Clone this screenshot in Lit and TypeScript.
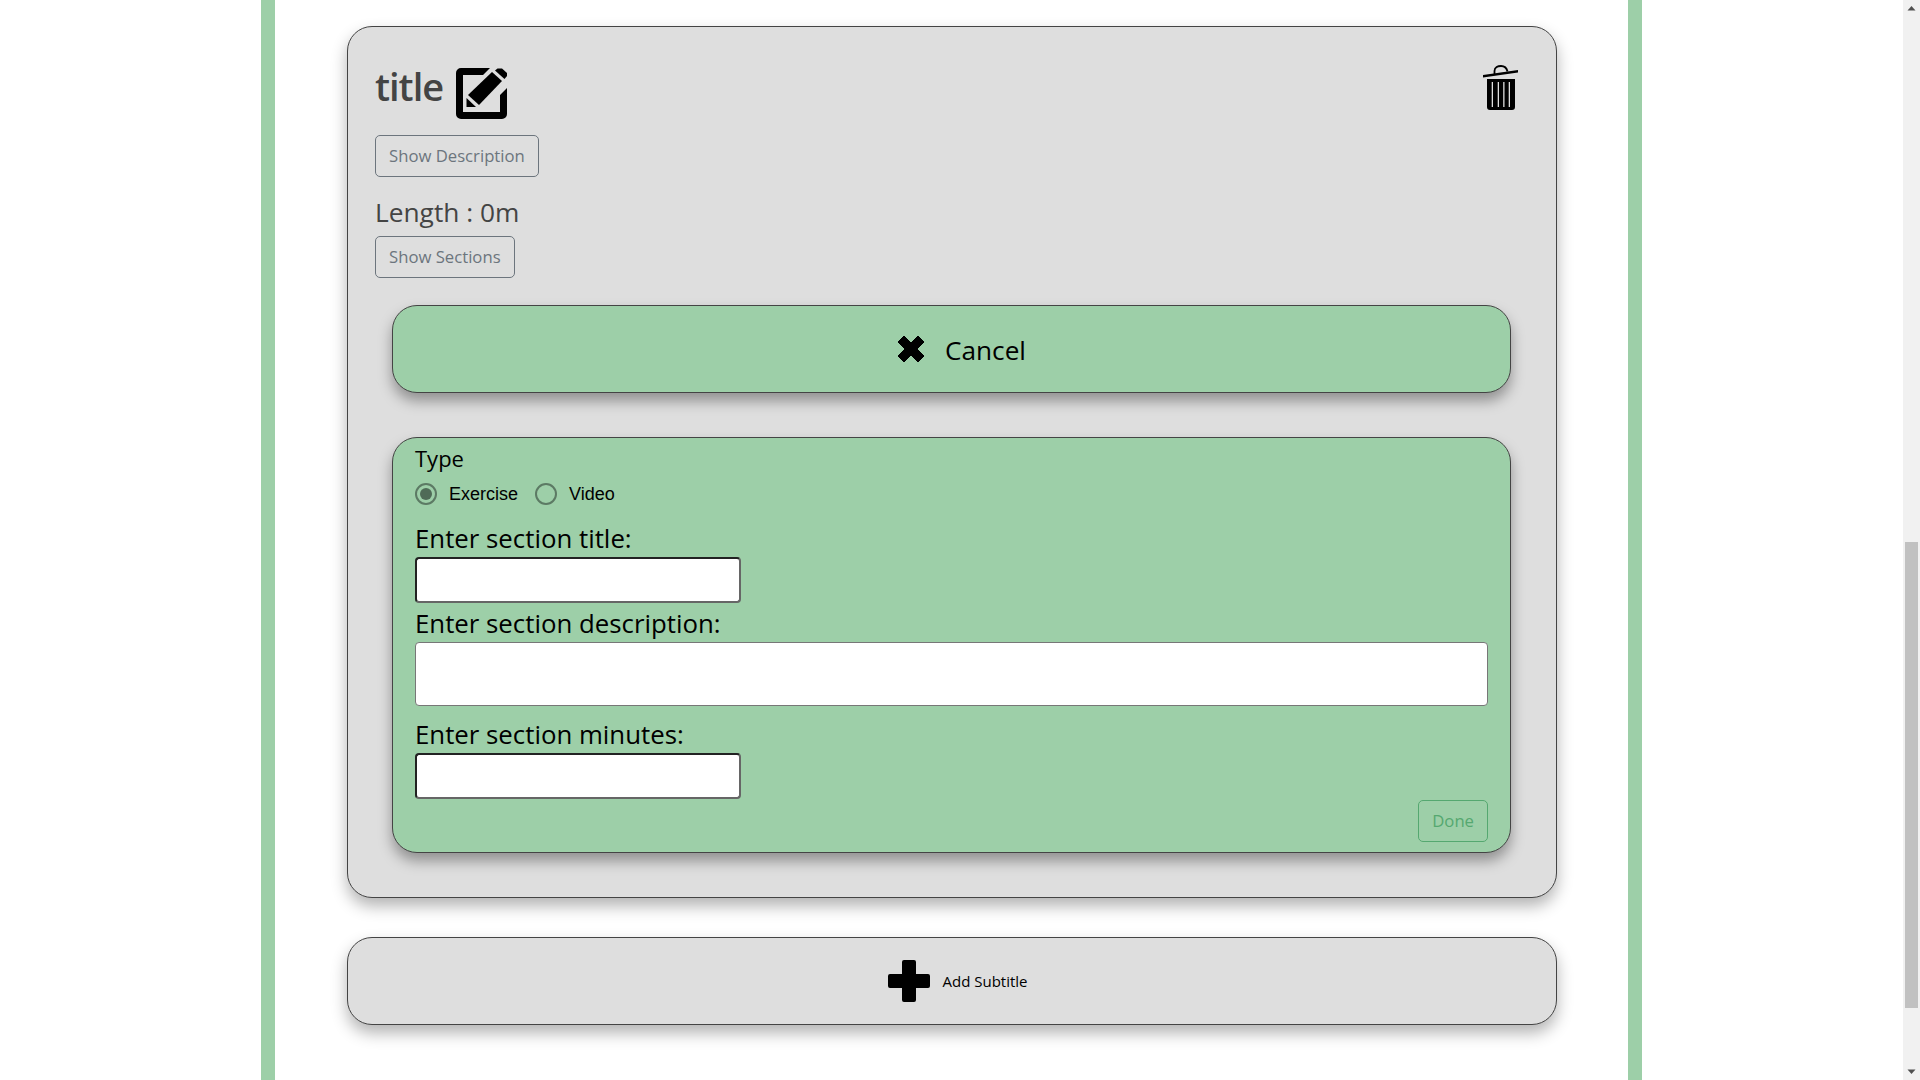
import { LitElement, html, css } from "lit";
import { customElement } from "lit/decorators.js";

@customElement("app-root")
export class AppRoot extends LitElement {
  static styles = css`
    :host { display: flex; width: 1920px; height: 1080px; overflow: hidden; background: #fff; font-family: "Open Sans", "Noto Sans", sans-serif; color: #000; }
    .page { flex: 1; min-width: 0; padding-left: 261px; }
    .column { box-sizing: border-box; width: 1381px; height: 1080px; border-left: 14px solid #9dcfa8; border-right: 14px solid #9dcfa8; padding: 26px 71px 0 72px; }
    .card { box-sizing: border-box; border: 1.5px solid #444; border-radius: 25px; background: #dedede; box-shadow: 0 8px 16px rgba(0,0,0,.3); }
    .lesson { height: 872px; padding: 27px 27px 0 27px; }
    .head { display: flex; justify-content: space-between; align-items: flex-start; height: 81px; }
    .title { display: flex; align-items: flex-start; gap: 13px; }
    h2 { margin: 0; padding-top: 7px; font-size: 38px; line-height: 50px; font-weight: 600; color: #444; letter-spacing: -1px; }
    .edit { width: 51px; height: 51px; margin-top: 14px; display: block; }
    .trash { width: 35px; height: 46px; margin: 10.5px 11px 0 0; display: block; }
    .btn { box-sizing: border-box; display: block; height: 42px; padding: 0 13px; background: transparent; border: 1px solid #6c757d; border-radius: 5px; color: #6c757d; font: 16.7px/40px "Open Sans", sans-serif; white-space: nowrap; }
    .desc-btn { width: 164px; }
    .sect-btn { width: 140px; }
    .length { box-sizing: border-box; font-size: 26.3px; line-height: 48px; padding-top: 11px; color: #444; height: 59px; }
    .green { background: #9dcfa8; margin-left: 17px; width: 1119px; }
    .cancel { height: 88px; margin-top: 27px; display: flex; align-items: center; justify-content: center; gap: 20px; padding-left: 20px; font-size: 26.2px; box-shadow: 0 8px 14px rgba(0,0,0,.35); }
    .cancel span { padding-top: 2px; }
    .form { height: 416px; margin-top: 44px; padding: 4px 22px 0 22px; box-shadow: 0 8px 14px rgba(0,0,0,.35); display: flex; flex-direction: column; }
    .type { font-size: 22px; line-height: 32px; }
    .radios { display: flex; align-items: center; height: 38px; margin-top: 1px; font: 18px "Liberation Sans", sans-serif; }
    .radio { box-sizing: border-box; width: 22px; height: 22px; border: 2px solid #5c7a64; border-radius: 50%; display: flex; align-items: center; justify-content: center; }
    .radio.on::after { content: ""; width: 12px; height: 12px; border-radius: 50%; background: #4f6b57; }
    .radio-label { margin: 0 17px 0 12px; }
    label { display: block; font-size: 25.8px; line-height: 38px; }
    .first { margin-top: 6px; }
    .mid { margin-top: 1px; }
    .input { box-sizing: border-box; display: block; width: 326px; height: 46px; background: #fff; border: 2px solid; border-color: #222 #666 #666 #222; border-radius: 4px; }
    .area { box-sizing: border-box; width: 100%; height: 64px; background: #fff; border: 1px solid #777; border-radius: 4px; }
    .gap2 { margin-top: 9px; }
    .done { box-sizing: border-box; align-self: flex-end; margin-top: 1px; height: 42px; padding: 0 13px; border: 1px solid #55a870; border-radius: 5px; color: #55a870; font: 16.7px/40px "Open Sans", sans-serif; }
    .add { height: 88px; margin-top: 39px; display: flex; align-items: center; justify-content: center; gap: 12px; padding-left: 12px; font-size: 15px; }
    .plus { width: 42px; height: 42px; display: block; }
    .x { width: 28px; height: 28px; display: block; }
    .scroll { width: 17px; height: 1080px; background: #f1f1f1; display: flex; flex-direction: column; align-items: center; }
    .arrow { width: 17px; height: 17px; display: block; flex: none; }
    .track { flex: 1; width: 13px; padding-top: 525px; box-sizing: border-box; }
    .thumb { height: 466px; background: #c1c1c1; }
  `;

  render() {
    return html`
      <div class="page">
        <div class="column">
          <div class="card lesson">
            <div class="head">
              <div class="title">
                <h2>title</h2>
                <svg class="edit" viewBox="0 0 51 51"><path d="M5 0H34L27 7H7V44H44V27L51 20V46a5 5 0 0 1-5 5H5a5 5 0 0 1-5-5V5a5 5 0 0 1 5-5Z"/><path d="M12 27 36 4 46 13 23 37Z"/><path d="M39 2.500 41.500 .5H46L51 5V8L48.500 11Z"/><path d="M10.500 30 20 39H10.500Z"/></svg>
              </div>
              <svg class="trash" viewBox="0 0 35 46"><path d="M0 10 35 5V7.500L0 12.500Z"/><path fill="none" stroke="#000" stroke-width="1.800" d="M11.500 9V6C11.500 2 15 1 18 1C21 1 23.500 2 24.500 6.500"/><path fill-rule="evenodd" d="M4 14H32V42a3 3 0 0 1-3 3H7a3 3 0 0 1-3-3ZM8.700 17H10V42H8.700ZM14.700 17H16V42H14.700ZM20.200 17H21.500V42H20.200ZM25.700 17H27V42H25.700Z"/></svg>
            </div>
            <div class="btn desc-btn">Show Description</div>
            <div class="length">Length : 0m</div>
            <div class="btn sect-btn">Show Sections</div>
            <div class="card green cancel">
              <svg class="x" viewBox="0 0 28 28"><path d="M7 1 14 8 21 1 27 7 20 14 27 21 21 27 14 20 7 27 1 21 8 14 1 7Z" stroke="#000" stroke-width="1" stroke-linejoin="round"/></svg>
              <span>Cancel</span>
            </div>
            <div class="card green form">
              <div class="type">Type</div>
              <div class="radios">
                <span class="radio on"></span><span class="radio-label">Exercise</span>
                <span class="radio"></span><span class="radio-label">Video</span>
              </div>
              <label class="first">Enter section title:</label>
              <div class="input"></div>
              <label class="mid">Enter section description:</label>
              <div class="area"></div>
              <label class="gap2">Enter section minutes:</label>
              <div class="input"></div>
              <div class="done">Done</div>
            </div>
          </div>
          <div class="card add">
            <svg class="plus" viewBox="0 0 42 42"><path d="M14 2a2 2 0 0 1 2-2h10a2 2 0 0 1 2 2V14H40a2 2 0 0 1 2 2V26a2 2 0 0 1-2 2H28V40a2 2 0 0 1-2 2H16a2 2 0 0 1-2-2V28H2a2 2 0 0 1-2-2V16a2 2 0 0 1 2-2H14Z"/></svg>
            <span>Add Subtitle</span>
          </div>
        </div>
      </div>
      <div class="scroll">
        <svg class="arrow" viewBox="0 0 17 17"><path d="M4.500 10.500 8.500 6 12.500 10.500Z" fill="#505050"/></svg>
        <div class="track"><div class="thumb"></div></div>
        <svg class="arrow" viewBox="0 0 17 17"><path d="M4.500 6.500 8.500 11 12.500 6.500Z" fill="#505050"/></svg>
      </div>
    `;
  }
}
